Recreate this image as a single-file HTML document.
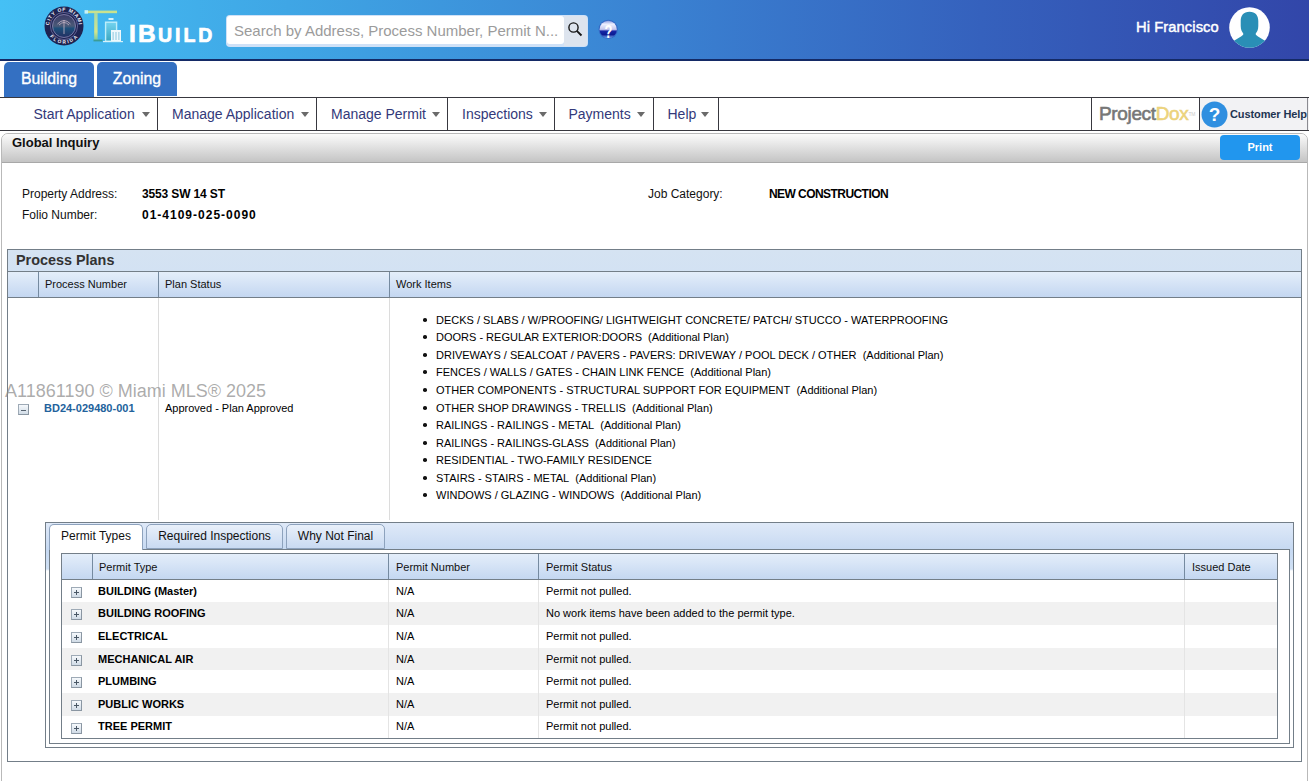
<!DOCTYPE html>
<html><head><meta charset="utf-8">
<style>
*{box-sizing:border-box;margin:0;padding:0}
html,body{width:1309px;height:781px;overflow:hidden;background:#fff;font-family:"Liberation Sans",sans-serif;position:relative}
.a{position:absolute;white-space:nowrap}
#hdr{left:0;top:0;width:1309px;height:61px;background:linear-gradient(90deg,#45c0f5 0%,#3fa6e5 22%,#3a82d2 50%,#3561bd 75%,#3246a9 100%);border-bottom:2px solid #142a66}
.tab{top:62px;height:34px;background:#3470c2;border-radius:5px 5px 0 0;color:#fff;font-size:15.8px;text-align:center;line-height:34px;-webkit-text-stroke:0.35px #fff}
#menu{left:0;top:97px;width:1309px;height:34px;border-top:1px solid #38383f;border-bottom:1px solid #38383f;background:#fff}
.sep{top:0;width:1px;height:32px;background:#38383f}
.mt{top:0;color:#33397a;font-size:14px;line-height:32px}
.car{top:14px;width:0;height:0;border-left:4px solid transparent;border-right:4px solid transparent;border-top:5px solid #6a6a6a}
.lbl{font-size:12px;color:#111}
.val{font-size:12px;color:#000;font-weight:bold}
.hl{background:#758aa0}
.th{font-size:11px;color:#111}
.li{font-size:11px;color:#000}
.bul{width:3.6px;height:3.6px;border-radius:50%;background:#111;margin-top:0.2px}
.pt{font-size:11px;color:#000;font-weight:bold}
.tx{font-size:11px;color:#000}
.plus{width:11px;height:11px;border:1px solid #9eaab6;border-right-color:#8a96a2;border-bottom-color:#8a96a2;background:linear-gradient(#f6f9fc,#d0dbe6)}
.plus:before{content:"";position:absolute;left:2px;top:4px;width:5px;height:1.3px;background:#4a5866}
.plus:after{content:"";position:absolute;left:3.9px;top:2px;width:1.3px;height:5px;background:#4a5866}
</style></head><body>
<!-- header -->
<div id="hdr" class="a"></div>
<!-- seal -->
<svg class="a" style="left:44px;top:6px" width="40" height="40" viewBox="0 0 40 40">
<defs><path id="arcT" d="M5.2 20 A14.8 14.8 0 0 1 34.8 20"/><path id="arcB" d="M5.5 20 A14.5 14.5 0 0 0 34.5 20"/>
<linearGradient id="sg" x1="0" y1="0" x2="0" y2="1"><stop offset="0" stop-color="#3a3a66"/><stop offset="0.5" stop-color="#4a5a78"/><stop offset="0.6" stop-color="#1d4f7a"/><stop offset="1" stop-color="#222f62"/></linearGradient></defs>
<circle cx="20" cy="20" r="19.5" fill="#1e2452"/>
<text font-family="Liberation Sans" font-weight="bold" font-size="5" fill="#eeeef8" letter-spacing="0.7"><textPath href="#arcT" startOffset="50%" text-anchor="middle">CITY OF MIAMI</textPath></text>
<text font-family="Liberation Sans" font-weight="bold" font-size="4.8" fill="#eeeef8" letter-spacing="0.9"><textPath href="#arcB" startOffset="50%" text-anchor="middle" dominant-baseline="hanging">FLORIDA</textPath></text>
<circle cx="20" cy="20" r="13.6" fill="none" stroke="#8c86b8" stroke-width="0.6"/>
<circle cx="20" cy="20" r="11.5" fill="url(#sg)" stroke="#9a94c0" stroke-width="0.7"/>
<path d="M20 14 L20 28 M13.5 18 Q20 11 26.5 18 M15 19 Q20 14 25 19" stroke="#c9b9c8" stroke-width="0.8" fill="none"/>
</svg>
<!-- crane logo -->
<svg class="a" style="left:84px;top:9px" width="40" height="34" viewBox="0 0 40 34">
<defs><linearGradient id="cg" x1="0" y1="0" x2="0" y2="1"><stop offset="0" stop-color="#a9d9a8"/><stop offset="0.7" stop-color="#d5e68a"/><stop offset="1" stop-color="#7cc9a0"/></linearGradient>
<linearGradient id="bg2" x1="0" y1="0" x2="0" y2="1"><stop offset="0" stop-color="#74d4f0"/><stop offset="1" stop-color="#3aa6c0"/></linearGradient></defs>
<rect x="1" y="1.6" width="32" height="2.6" fill="#c9e28e"/>
<rect x="0.5" y="1.2" width="3.5" height="3.4" fill="#c6f2fa"/>
<rect x="10.2" y="4" width="3.4" height="27" fill="url(#cg)"/>
<rect x="9.5" y="30.6" width="9" height="1.8" fill="#3c9c94"/>
<rect x="21.6" y="13.2" width="11" height="19" fill="url(#bg2)" stroke="#bdeefa" stroke-width="1.4"/>
<rect x="24.5" y="9" width="5" height="2" fill="#d8f2fa"/>
<rect x="27" y="21" width="10" height="11.5" fill="#eef8fc"/>
<rect x="28.6" y="23" width="1" height="8" fill="#8cc8e0"/><rect x="31.5" y="23" width="1" height="8" fill="#8cc8e0"/><rect x="34.4" y="23" width="1" height="8" fill="#8cc8e0"/>
<rect x="19" y="32" width="20" height="1.2" fill="#d6f2fa"/>
</svg>
<div class="a" style="left:129px;top:20.5px;font-size:24.5px;font-weight:bold;color:#fff;letter-spacing:2.2px;line-height:26px;-webkit-text-stroke:0.7px #fff">IB<span style="font-size:19.5px;letter-spacing:3px">UILD</span></div>
<!-- search -->
<div class="a" style="left:225.5px;top:14.5px;width:362.5px;height:32px;border-radius:4px;background:#cfe1f7"></div>
<div class="a" style="left:564px;top:15.5px;width:23px;height:30px;border-radius:0 3px 3px 0;background:#dde4ee"></div>
<div class="a" style="left:227px;top:16px;width:337px;height:28px;border-radius:3px;background:#fff"></div>
<div class="a" style="left:234px;top:16px;font-size:15px;line-height:29px;color:#9b9b9b">Search by Address, Process Number, Permit N...</div>
<svg class="a" style="left:566px;top:20px" width="18" height="18" viewBox="0 0 18 18"><circle cx="7.5" cy="7.5" r="4.6" fill="none" stroke="#161616" stroke-width="1.4"/><path d="M10.8 10.8 L15.5 15.5" stroke="#161616" stroke-width="1.9"/></svg>
<!-- help globe -->
<svg class="a" style="left:598px;top:18px" width="21" height="23" viewBox="0 0 21 23"><defs><linearGradient id="gg" x1="0" y1="0" x2="0" y2="1"><stop offset="0" stop-color="#8f9ee0"/><stop offset="0.2" stop-color="#eef0ff"/><stop offset="0.5" stop-color="#c4c6ee"/><stop offset="0.6" stop-color="#1626a6"/><stop offset="0.8" stop-color="#0b1a92"/><stop offset="1" stop-color="#7aa8ee"/></linearGradient></defs><circle cx="10.2" cy="11.4" r="9.6" fill="#3050b8" opacity="0.55"/><circle cx="10.2" cy="11.4" r="8.6" fill="url(#gg)"/><text x="10.4" y="19.6" text-anchor="middle" font-family="Liberation Sans" font-weight="bold" font-size="19" fill="#fff" transform="translate(10.4 0) scale(0.68 1) translate(-10.4 0)">?</text></svg>
<div class="a" style="left:1136px;top:17px;font-size:14.7px;line-height:20px;color:#fff;letter-spacing:0.1px;-webkit-text-stroke:0.45px #fff">Hi Francisco</div>
<svg class="a" style="left:1229px;top:7px" width="41" height="41" viewBox="0 0 41 41"><defs><clipPath id="cc"><circle cx="20.5" cy="20.5" r="20.3"/></clipPath></defs><circle cx="20.5" cy="20.5" r="20.3" fill="#fff"/><g clip-path="url(#cc)" fill="#2a8fb6"><path d="M20.5 4.7 C26.5 4.7 29.3 8.5 29.3 14 L29.3 19 C29.3 23 27.8 25.3 26.8 26.3 L26.8 27.8 C29.5 30 33 32 37.5 34.5 L37.5 45 L3.5 45 L3.5 34.5 C8 32 11.5 30 14.2 27.8 L14.2 26.3 C13.2 25.3 11.7 23 11.7 19 L11.7 14 C11.7 8.5 14.5 4.7 20.5 4.7 Z"/></g></svg>
<!-- tabs -->
<div class="a tab" style="left:4px;width:90px;height:35px">Building</div>
<div class="a tab" style="left:97px;width:80px">Zoning</div>
<!-- menu -->
<div id="menu" class="a">
 <div class="a mt" style="left:33.5px">Start Application</div><div class="a car" style="left:142px"></div><div class="a sep" style="left:157px"></div>
 <div class="a mt" style="left:172px">Manage Application</div><div class="a car" style="left:301px"></div><div class="a sep" style="left:316px"></div>
 <div class="a mt" style="left:331px">Manage Permit</div><div class="a car" style="left:432px"></div><div class="a sep" style="left:447px"></div>
 <div class="a mt" style="left:462px">Inspections</div><div class="a car" style="left:538.5px"></div><div class="a sep" style="left:554px"></div>
 <div class="a mt" style="left:568.5px">Payments</div><div class="a car" style="left:637px"></div><div class="a sep" style="left:653px"></div>
 <div class="a mt" style="left:667.5px">Help</div><div class="a car" style="left:701px"></div><div class="a sep" style="left:718px"></div>
 <div class="a sep" style="left:1091px"></div>
 <div class="a" style="left:1099px;top:4px;font-size:19px;line-height:24px;color:#777;letter-spacing:-0.35px;-webkit-text-stroke:0.6px #777">Project<span style="color:#ecd37c;-webkit-text-stroke:0.6px #ecd37c">Dox</span><span style="font-size:5px;vertical-align:top;color:#ccc;-webkit-text-stroke:0">TM</span></div>
 <div class="a sep" style="left:1199px"></div>
 <div class="a" style="left:1200px;top:0;width:109px;height:32px;background:#f2f2f4"></div>
 <svg class="a" style="left:1201px;top:3px" width="27" height="27" viewBox="0 0 27 27"><circle cx="13.5" cy="13.5" r="13" fill="#2f8fe0"/><text x="13.5" y="20" text-anchor="middle" font-family="Liberation Sans" font-weight="bold" font-size="19" fill="#fff">?</text></svg>
 <div class="a" style="left:1230px;top:0;font-size:11px;line-height:32px;color:#1e3552;font-weight:bold;letter-spacing:-0.1px">Customer Help</div>
 <div class="a sep" style="left:1307px;background:#8a8a90"></div>
</div>
<!-- Global inquiry panel -->
<div class="a" style="left:1px;top:133px;width:1307px;height:700px;border:1px solid #b9b9b9;border-radius:7px 7px 0 0;overflow:hidden">
  <div class="a" style="left:0;top:0;width:1305px;height:29px;background:linear-gradient(#fbfbfb,#c4c4c4);border-bottom:1px solid #a8a8a8"></div>
  <div class="a" style="left:10px;top:1px;font-size:13px;font-weight:bold;color:#111;line-height:16px">Global Inquiry</div>
  <div class="a" style="left:1218px;top:1px;width:80px;height:25px;background:#2196ee;border-radius:4px;color:#fff;font-weight:bold;font-size:11px;text-align:center;line-height:25px">Print</div>
</div>
<div class="a lbl" style="left:22px;top:187px">Property Address:</div>
<div class="a val" style="left:142px;top:187px;letter-spacing:-0.14px">3553 SW 14 ST</div>
<div class="a lbl" style="left:22px;top:208px">Folio Number:</div>
<div class="a val" style="left:142px;top:208px;letter-spacing:1px">01-4109-025-0090</div>
<div class="a lbl" style="left:648px;top:187px">Job Category:</div>
<div class="a val" style="left:769px;top:187px;letter-spacing:-0.56px">NEW CONSTRUCTION</div>

<!-- Process plans -->
<div class="a" style="left:7px;top:249px;width:1295px;height:513px;border:1px solid #737e88;background:#fff"></div>
<div class="a" style="left:8px;top:250px;width:1293px;height:22px;background:linear-gradient(#d5e3f2,#d3e2f3);border-bottom:1px solid #737e88"></div>
<div class="a" style="left:16px;top:251px;font-size:14.4px;font-weight:bold;color:#333;line-height:18px">Process Plans</div>
<div class="a" style="left:8px;top:272px;width:1293px;height:26px;background:linear-gradient(#e4eefa,#c4d7f1);border-bottom:1px solid #737e88"></div>
<div class="a hl" style="left:38px;top:272px;width:1px;height:25px"></div>
<div class="a hl" style="left:158px;top:272px;width:1px;height:25px"></div>
<div class="a hl" style="left:389px;top:272px;width:1px;height:25px"></div>
<div class="a th" style="left:45px;top:278px">Process Number</div>
<div class="a th" style="left:165px;top:278px">Plan Status</div>
<div class="a th" style="left:396px;top:278px">Work Items</div>
<div class="a" style="left:158px;top:298px;width:1px;height:222px;background:#dcdcdc"></div>
<div class="a" style="left:389px;top:298px;width:1px;height:222px;background:#dcdcdc"></div>

<div id="wi">
<div class="a bul" style="left:423px;top:318px"></div><div class="a li" style="left:436px;top:314px">DECKS / SLABS / W/PROOFING/ LIGHTWEIGHT CONCRETE/ PATCH/ STUCCO - WATERPROOFING</div>
<div class="a bul" style="left:423px;top:335px"></div><div class="a li" style="left:436px;top:331px">DOORS - REGULAR EXTERIOR:DOORS&nbsp; (Additional Plan)</div>
<div class="a bul" style="left:423px;top:353px"></div><div class="a li" style="left:436px;top:349px">DRIVEWAYS / SEALCOAT / PAVERS - PAVERS: DRIVEWAY / POOL DECK / OTHER&nbsp; (Additional Plan)</div>
<div class="a bul" style="left:423px;top:370px"></div><div class="a li" style="left:436px;top:366px">FENCES / WALLS / GATES - CHAIN LINK FENCE&nbsp; (Additional Plan)</div>
<div class="a bul" style="left:423px;top:388px"></div><div class="a li" style="left:436px;top:384px">OTHER COMPONENTS - STRUCTURAL SUPPORT FOR EQUIPMENT&nbsp; (Additional Plan)</div>
<div class="a bul" style="left:423px;top:406px"></div><div class="a li" style="left:436px;top:402px">OTHER SHOP DRAWINGS - TRELLIS&nbsp; (Additional Plan)</div>
<div class="a bul" style="left:423px;top:423px"></div><div class="a li" style="left:436px;top:419px">RAILINGS - RAILINGS - METAL&nbsp; (Additional Plan)</div>
<div class="a bul" style="left:423px;top:441px"></div><div class="a li" style="left:436px;top:437px">RAILINGS - RAILINGS-GLASS&nbsp; (Additional Plan)</div>
<div class="a bul" style="left:423px;top:458px"></div><div class="a li" style="left:436px;top:454px">RESIDENTIAL - TWO-FAMILY RESIDENCE</div>
<div class="a bul" style="left:423px;top:476px"></div><div class="a li" style="left:436px;top:472px">STAIRS - STAIRS - METAL&nbsp; (Additional Plan)</div>
<div class="a bul" style="left:423px;top:493px"></div><div class="a li" style="left:436px;top:489px">WINDOWS / GLAZING - WINDOWS&nbsp; (Additional Plan)</div>
</div>

<div class="a" style="left:18px;top:404px;width:11px;height:11px;border:1px solid #9eaab6;border-right-color:#8a96a2;border-bottom-color:#8a96a2;background:linear-gradient(#f6f9fc,#d0dbe6)"><div class="a" style="left:2px;top:5px;width:5px;height:1.2px;background:#56636f"></div></div>
<div class="a" style="left:44px;top:402px;font-size:11px;font-weight:bold;color:#22629c">BD24-029480-001</div>
<div class="a tx" style="left:165px;top:402px">Approved - Plan Approved</div>

<!-- watermark -->
<div class="a" style="left:5px;top:380px;font-size:18px;color:rgba(140,140,140,0.72);line-height:22px">A11861190 © Miami MLS® 2025</div>

<!-- tab panel -->
<div class="a" style="left:45px;top:522px;width:1249px;height:226px;border:1px solid #737e88;background:linear-gradient(#dfe9f8 0px,#c6d9f2 27px,#d0e0f4 46px,#fff 48px)"></div>
<div class="a" style="left:49px;top:549px;width:1241px;height:195px;border:1px solid #737e88;background:#fff"></div>
<div class="a" style="left:49px;top:524px;width:94px;height:26px;border:1px solid #8da2bd;border-bottom:none;border-radius:5px 5px 0 0;background:#fff;font-size:12px;line-height:22px;text-align:center;color:#111">Permit Types</div>
<div class="a" style="left:146px;top:524px;width:137px;height:25px;border:1px solid #8da2bd;border-radius:5px 5px 0 0;background:linear-gradient(#e9f0fa,#c9daf2);font-size:12px;line-height:22px;text-align:center;color:#111">Required Inspections</div>
<div class="a" style="left:286px;top:524px;width:99px;height:25px;border:1px solid #8da2bd;border-radius:5px 5px 0 0;background:linear-gradient(#e9f0fa,#c9daf2);font-size:12px;line-height:22px;text-align:center;color:#111">Why Not Final</div>

<!-- grid -->
<div class="a" style="left:61px;top:553px;width:1217px;height:186px;border:1px solid #737e88;background:#fff"></div>
<div class="a" style="left:62px;top:554px;width:1215px;height:26px;background:linear-gradient(#e4eefa,#c4d7f1);border-bottom:1px solid #737e88"></div>
<div class="a hl" style="left:92px;top:554px;width:1px;height:25px"></div>
<div class="a hl" style="left:388px;top:554px;width:1px;height:25px"></div>
<div class="a hl" style="left:538px;top:554px;width:1px;height:25px"></div>
<div class="a hl" style="left:1184px;top:554px;width:1px;height:25px"></div>
<div class="a th" style="left:99px;top:561px">Permit Type</div>
<div class="a th" style="left:396px;top:561px">Permit Number</div>
<div class="a th" style="left:546px;top:561px">Permit Status</div>
<div class="a th" style="left:1192px;top:561px">Issued Date</div>
<div id="rows">
<div class="a plus" style="left:71px;top:587px"></div>
<div class="a pt" style="left:98px;top:585px">BUILDING (Master)</div>
<div class="a tx" style="left:396px;top:585px">N/A</div>
<div class="a tx" style="left:546px;top:585px">Permit not pulled.</div>
<div class="a" style="left:62px;top:602px;width:1215px;height:23px;background:#f1f1f1"></div>
<div class="a plus" style="left:71px;top:609px"></div>
<div class="a pt" style="left:98px;top:607px">BUILDING ROOFING</div>
<div class="a tx" style="left:396px;top:607px">N/A</div>
<div class="a tx" style="left:546px;top:607px">No work items have been added to the permit type.</div>
<div class="a plus" style="left:71px;top:632px"></div>
<div class="a pt" style="left:98px;top:630px">ELECTRICAL</div>
<div class="a tx" style="left:396px;top:630px">N/A</div>
<div class="a tx" style="left:546px;top:630px">Permit not pulled.</div>
<div class="a" style="left:62px;top:648px;width:1215px;height:22px;background:#f1f1f1"></div>
<div class="a plus" style="left:71px;top:655px"></div>
<div class="a pt" style="left:98px;top:653px">MECHANICAL AIR</div>
<div class="a tx" style="left:396px;top:653px">N/A</div>
<div class="a tx" style="left:546px;top:653px">Permit not pulled.</div>
<div class="a plus" style="left:71px;top:677px"></div>
<div class="a pt" style="left:98px;top:675px">PLUMBING</div>
<div class="a tx" style="left:396px;top:675px">N/A</div>
<div class="a tx" style="left:546px;top:675px">Permit not pulled.</div>
<div class="a" style="left:62px;top:693px;width:1215px;height:23px;background:#f1f1f1"></div>
<div class="a plus" style="left:71px;top:700px"></div>
<div class="a pt" style="left:98px;top:698px">PUBLIC WORKS</div>
<div class="a tx" style="left:396px;top:698px">N/A</div>
<div class="a tx" style="left:546px;top:698px">Permit not pulled.</div>
<div class="a plus" style="left:71px;top:723px"></div>
<div class="a pt" style="left:98px;top:720px">TREE PERMIT</div>
<div class="a tx" style="left:396px;top:720px">N/A</div>
<div class="a tx" style="left:546px;top:720px">Permit not pulled.</div>
<div class="a" style="left:388px;top:580px;width:1px;height:158px;background:#e4e4e4"></div>
<div class="a" style="left:538px;top:580px;width:1px;height:158px;background:#e4e4e4"></div>
<div class="a" style="left:1184px;top:580px;width:1px;height:158px;background:#e4e4e4"></div>
</div>
</body></html>
